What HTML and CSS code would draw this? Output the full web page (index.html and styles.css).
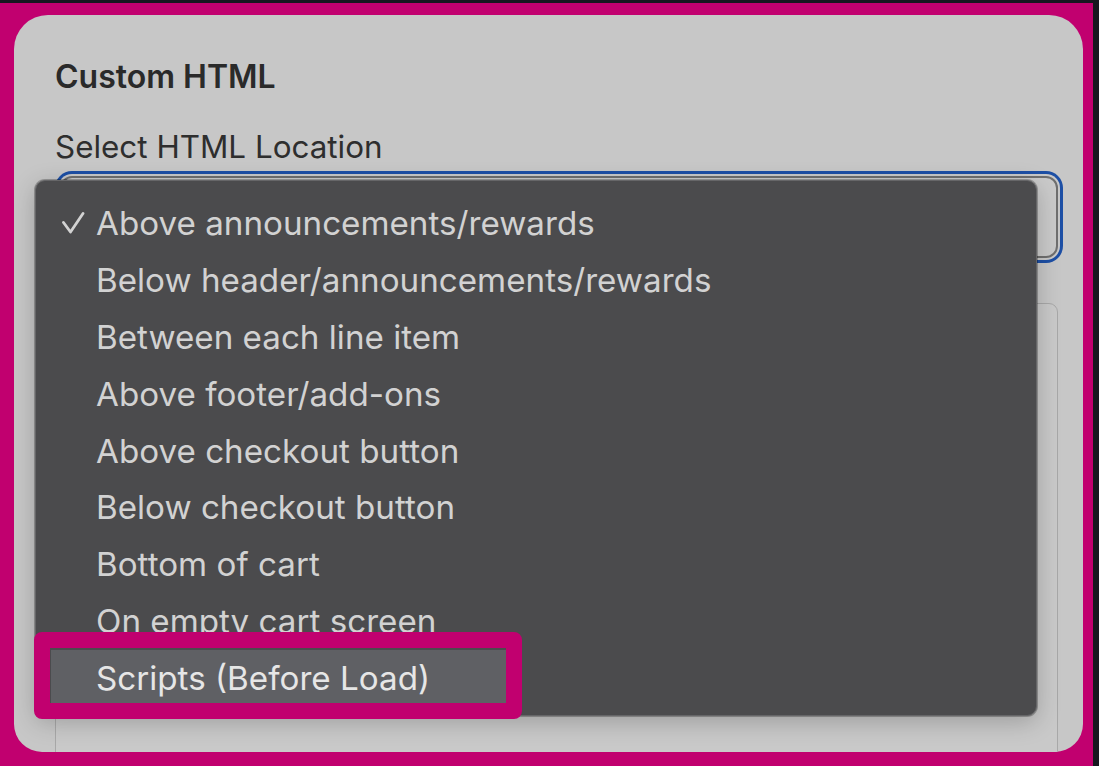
FILE: index.html
```html
<html lang="en">
<head>
  <meta charset="UTF-8">
  <meta name="viewport" content="width=device-width, initial-scale=1.0">
  <title>Custom HTML</title>
  <link rel="stylesheet" href="styles.css">
</head>
<body>
  <div class="frame">
    <div class="card">
      <h3 class="title">Custom HTML</h3>
      <label class="fieldLabel" for="location">Select HTML Location</label>
      <div class="selectField" id="location"></div>
      <div class="textArea"></div>

      <ul class="menu">
        <li class="menuItem checked">
          <svg class="check" width="24" height="24" viewBox="0 0 24 24">
            <path d="M1.5 10.5 L8.5 20 L21 1.5" fill="none" stroke="#d2d2d2" stroke-width="2.8" stroke-linecap="round" stroke-linejoin="round"/>
          </svg>
          Above announcements/rewards
        </li>
        <li class="menuItem">Below header/announcements/rewards</li>
        <li class="menuItem">Between each line item</li>
        <li class="menuItem">Above footer/add-ons</li>
        <li class="menuItem">Above checkout button</li>
        <li class="menuItem">Below checkout button</li>
        <li class="menuItem">Bottom of cart</li>
        <li class="menuItem">On empty cart screen</li>
        <li class="menuItem active">Scripts (Before Load)</li>
      </ul>

      <div class="callout"></div>
    </div>
  </div>
</body>
</html>
```

FILE: styles.css
```css
body, html {
  margin: 0;
  padding: 0;
}
body {
  font-family: "Inter", "Noto Sans", sans-serif;
  background-color: #17171f;
  width: 1099px;
  height: 766px;
  overflow: hidden;
}
.frame {
  box-sizing: border-box;
  margin: 3px 6px 0 0;
  height: 763px;
  padding: 12px 10px 14px 14px;
  background-color: #c1006f;
}
.card {
  position: relative;
  box-sizing: border-box;
  height: 100%;
  padding: 0 25px 0 41px;
  background-color: #c7c7c7;
  border-radius: 34px 34px 28px 28px;
  overflow: hidden;
}
.title {
  margin: 0;
  padding-top: 42px;
  font-size: 32px;
  line-height: 40px;
  font-weight: 600;
  color: #2a2a2a;
}
.fieldLabel {
  display: block;
  margin-top: 30px;
  font-size: 31.4px;
  line-height: 40px;
  color: #2e2e2e;
}
.selectField {
  box-sizing: border-box;
  margin: 9px 0 0 5px;
  height: 82px;
  border: 2px solid #6f6f6f;
  border-radius: 12px;
  background-color: #cacaca;
  box-shadow: 0 0 0 2px #c9c9c9, 0 0 0 5px #1d4fa5;
}
.textArea {
  box-sizing: border-box;
  margin-top: 45px;
  height: 500px;
  border: 1px solid #a8a8a8;
  border-radius: 9px;
  background-color: #c9c9c9;
}
.menu {
  position: absolute;
  left: 21px;
  top: 165px;
  width: 1002px;
  height: 536px;
  box-sizing: border-box;
  margin: 0;
  padding: 14px 0 0 0;
  list-style: none;
  background-color: #4b4b4d;
  border: 1px solid #666668;
  border-radius: 10px;
  box-shadow: 0 6px 24px rgba(0, 0, 0, 0.22), 0 0 0 1px rgba(0, 0, 0, 0.25);
}
.menuItem {
  position: relative;
  height: 56.9px;
  line-height: 56.9px;
  padding-left: 60px;
  font-size: 33.2px;
  color: #d2d2d2;
  white-space: nowrap;
}
.check {
  position: absolute;
  left: 26px;
  top: 17px;
}
.menuItem.active {
  margin-left: 15px;
  width: 456px;
  padding-left: 45px;
  box-sizing: border-box;
  background-color: #5f6064;
  color: #e6e6e6;
}
.callout {
  position: absolute;
  left: 20px;
  top: 617px;
  width: 488px;
  height: 87px;
  box-sizing: border-box;
  border: 16px solid #c1006f;
  border-radius: 8px;
}
```
